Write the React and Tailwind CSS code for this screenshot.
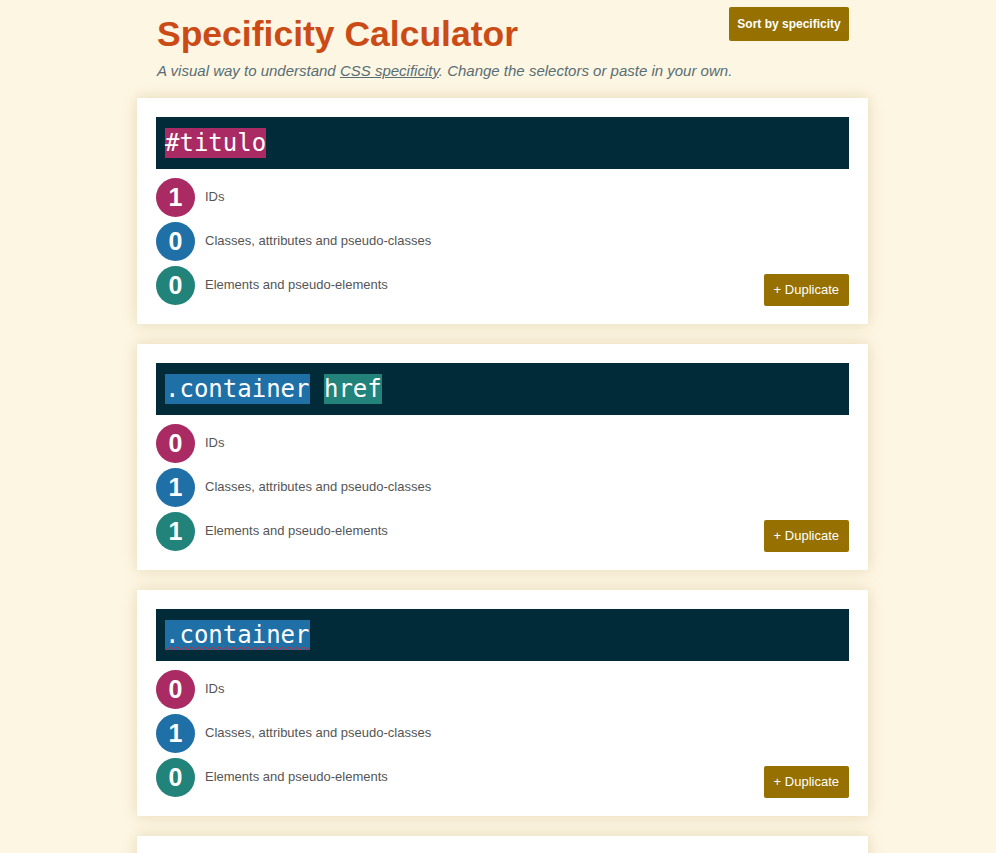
import React from "react";

const cards = [
  { parts: [{ t: "#titulo", c: "id" }], ids: 1, cls: 0, el: 0 },
  { parts: [{ t: ".container", c: "cls" }, { t: " ", c: null }, { t: "href", c: "el" }], ids: 0, cls: 1, el: 1 },
  { parts: [{ t: ".container", c: "cls", wavy: true }], ids: 0, cls: 1, el: 0 },
  { parts: [{ t: "a", c: "el" }], ids: 0, cls: 0, el: 1 },
];

const bgFor = { id: "bg-[#aa2a64]", cls: "bg-[#2070a8]", el: "bg-[#21837a]" };

function Row({ n, color, label, children }) {
  return (
    <div className="flex items-center h-[39px]">
      <div className={`w-[39px] h-[39px] rounded-full ${color} flex items-center justify-center text-white font-bold text-[25px] leading-none shrink-0`}>
        {n}
      </div>
      <div className="ml-[10px] text-[13px] text-[#555] flex-1">{label}</div>
      {children}
    </div>
  );
}

function Card({ card }) {
  return (
    <div className="bg-white shadow-[0_0_14px_rgba(170,140,70,0.28)] px-[19px] pt-[19px] pb-[19px]">
      <div className="bg-[#022b3a] h-[52px] flex items-center pl-[9px]">
        <div className="font-['DejaVu_Sans_Mono',monospace] text-[24px] leading-[30px] text-white whitespace-pre">
          {card.parts.map((p, i) =>
            p.c ? (
              <span
                key={i}
                className={`${bgFor[p.c]} inline-block ${p.wavy ? "underline decoration-wavy decoration-[#e02020] decoration-1 underline-offset-[3px]" : ""}`}
              >
                {p.t}
              </span>
            ) : (
              <span key={i}>{p.t}</span>
            )
          )}
        </div>
      </div>
      <div className="mt-[9px] flex flex-col gap-[5px]">
        <Row n={card.ids} color="bg-[#aa2a64]" label="IDs" />
        <Row n={card.cls} color="bg-[#2070a8]" label="Classes, attributes and pseudo-classes" />
        <Row n={card.el} color="bg-[#21837a]" label="Elements and pseudo-elements">
          <button className="self-end h-[32px] px-[10px] bg-[#967000] text-white text-[13px] rounded-[2px] translate-y-[1px]">
            + Duplicate
          </button>
        </Row>
      </div>
    </div>
  );
}

export default function App() {
  return (
    <div className="min-h-screen bg-[#fdf6e3] font-['Liberation_Sans',Arial,sans-serif]">
      <div className="w-[731px] ml-[137px]">
        <div className="px-[19px] pt-[7px]">
          <div className="flex justify-between items-start">
            <h1 className="text-[35.5px] font-bold text-[#cb4b16] leading-none mt-[10px] ml-[1px]">
              Specificity Calculator
            </h1>
            <button className="h-[34px] w-[120px] bg-[#967000] text-white text-[12px] font-bold rounded-[2px]">
              Sort by specificity
            </button>
          </div>
          <p className="italic text-[15px] text-[#586e75] mt-[9px] leading-[18px] ml-[1px]">
            A visual way to understand <span className="underline">CSS specificity</span>. Change the selectors or paste in your own.
          </p>
        </div>
        <div className="mt-[18px] flex flex-col gap-[20px] pb-[20px]">
          {cards.map((c, i) => (
            <Card key={i} card={c} />
          ))}
        </div>
      </div>
    </div>
  );
}
